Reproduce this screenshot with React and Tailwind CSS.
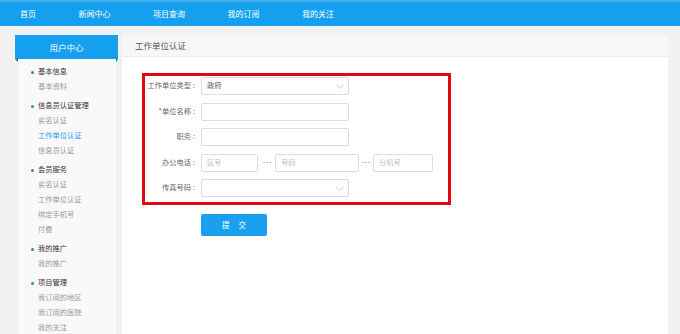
const font = { fontFamily: '"Noto Sans CJK SC", "Noto Sans", sans-serif' }

const navItems = ['首页', '新闻中心', '项目查询', '我的订阅', '我的关注']

const sideMenu = [
  { title: '基本信息', items: ['基本资料'] },
  { title: '信息员认证管理', items: ['实名认证', '工作单位认证', '信息员认证'] },
  { title: '会员服务', items: ['实名认证', '工作单位认证', '绑定手机号', '付费'] },
  { title: '我的推广', items: ['我的推广'] },
  { title: '项目管理', items: ['我订阅的地区', '我订阅的医院', '我的关注'] },
]

// 下拉框
function Select({ value }) {
  return (
    <div className="w-[148px] h-[18px] border border-[#dcdcdc] rounded-[2px] bg-white flex items-center justify-between pl-[5px] pr-[4px]">
      <span className="text-[7.25px] text-[#555] leading-none">{value}</span>
      <svg width="9" height="5" viewBox="0 0 9 5" className="shrink-0">
        <polyline points="0.5,0.5 4.5,4.5 8.5,0.5" fill="none" stroke="#c4c4c4" strokeWidth="0.8" />
      </svg>
    </div>
  )
}

function Input({ w = 'w-[148px]', placeholder = '' }) {
  return (
    <div className={`${w} h-[18px] border border-[#dcdcdc] rounded-[2px] bg-white flex items-center pl-[5px]`}>
      <span className="text-[7.25px] text-[#c0c0c0] leading-none">{placeholder}</span>
    </div>
  )
}

function Row({ label, required, children }) {
  return (
    <div className="flex items-center h-[18px]">
      <div className="w-[53px] flex justify-end items-center text-[7.25px] text-[#666] leading-none whitespace-nowrap">
        {required && <span className="text-[#e60012]">*</span>}
        <span>{label}</span>
        <span className="ml-[2px] w-[5px]">:</span>
      </div>
      <div className="ml-[3px] flex items-center">{children}</div>
    </div>
  )
}

function Dash({ w }) {
  return (
    <span className={`${w} flex items-center justify-center gap-[1px]`}>
      <span className="w-[2px] h-px bg-[#bbb]" />
      <span className="w-[2px] h-px bg-[#bbb]" />
      <span className="w-[2px] h-px bg-[#bbb]" />
    </span>
  )
}

export default function App() {
  return (
    <div className="w-[680px] h-[334px] overflow-hidden bg-[#f1f1f1]" style={font}>
      {/* 顶部导航 */}
      <div className="h-[26px] bg-[#14a0ee] border-t-2 border-[#45b0ec] flex items-center pl-[20px] gap-[42.5px]">
        {navItems.map((n) => (
          <span key={n} className="text-white text-[8px] leading-none">{n}</span>
        ))}
      </div>

      <div className="flex pl-[15px] pt-[9px] gap-[4px]">
        {/* 左侧菜单 */}
        <div className="w-[103px] shrink-0">
          <div className="relative h-[24px] bg-[#14a0ee] flex items-center justify-center">
            <span className="text-white text-[8.5px] leading-none">用户中心</span>
            <span className="absolute left-0 top-full w-0 h-0 border-t-[3px] border-t-[#0b6fa8] border-l-[3px] border-l-transparent" />
            <span className="absolute right-0 top-full w-0 h-0 border-t-[3px] border-t-[#0b6fa8] border-r-[2px] border-r-transparent" />
          </div>
          <div className="ml-[3px] mr-[2px] h-[300px] bg-[#f9f9f9] pt-[6px] pl-[13px] flex flex-col gap-[5px]">
            {sideMenu.map((s) => (
              <div key={s.title} className="flex flex-col">
                <div className="h-[14px] flex items-center gap-[4px]">
                  <span className="w-[3px] h-[3px] rounded-full bg-[#1a8fd6]" />
                  <span className="text-[7.25px] text-[#333] leading-none">{s.title}</span>
                </div>
                {s.items.map((it, i) => (
                  <div key={i} className="h-[15px] flex items-center pl-[7px]">
                    <span
                      className={`text-[7.25px] leading-none ${
                        s.title === '信息员认证管理' && it === '工作单位认证' ? 'text-[#1a9ff0]' : 'text-[#9a9a9a]'
                      }`}
                    >
                      {it}
                    </span>
                  </div>
                ))}
              </div>
            ))}
          </div>
        </div>

        {/* 右侧内容 */}
        <div className="w-[546px] shrink-0 bg-white h-[300px]">
          <div className="h-[22px] bg-[#f7f7f7] border-b border-[#ededed] flex items-center pl-[13px]">
            <span className="text-[8.5px] text-[#555] leading-none">工作单位认证</span>
          </div>
          <div className="pl-[20px] pt-[16px]">
            <div className="w-[309px] border-[3px] border-[#e30613] pt-[1px] pb-[5px] flex flex-col gap-[7.5px]">
              <Row label="工作单位类型">
                <Select value="政府" />
              </Row>
              <Row label="单位名称" required>
                <Input />
              </Row>
              <Row label="职务">
                <Input />
              </Row>
              <Row label="办公电话">
                <Input w="w-[57px]" placeholder="区号" />
                <Dash w="w-[17px]" />
                <Input w="w-[84px]" placeholder="号码" />
                <Dash w="w-[14px]" />
                <Input w="w-[60px]" placeholder="分机号" />
              </Row>
              <Row label="传真号码">
                <Select value="" />
              </Row>
            </div>
            <button className="ml-[59px] mt-[9px] w-[66px] h-[22px] rounded-[2px] bg-[#1ba0ef] text-white text-[7.5px] leading-none flex items-center justify-center gap-[9px]">
              <span>提</span>
              <span>交</span>
            </button>
          </div>
        </div>
      </div>
    </div>
  )
}
